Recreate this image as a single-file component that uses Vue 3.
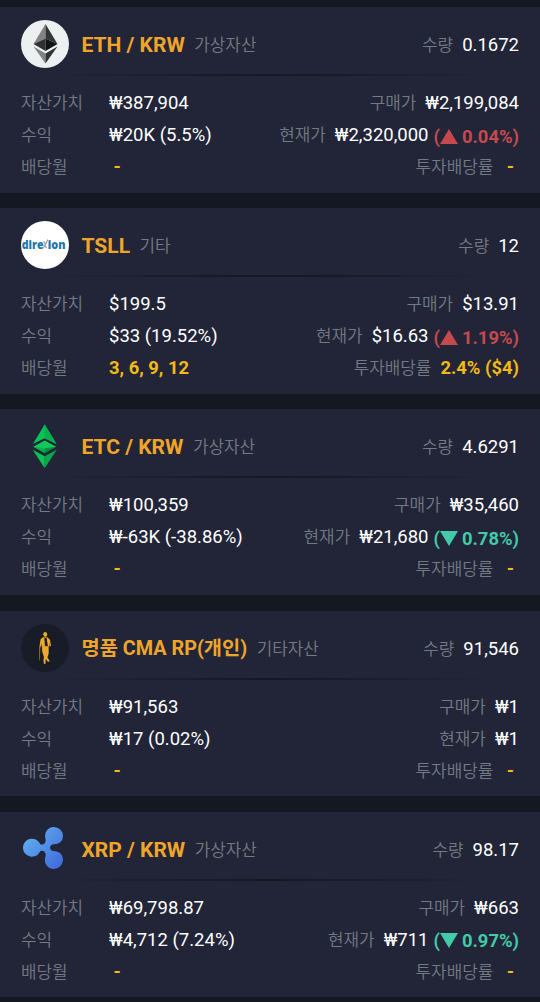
<template>
	<div class="asset-list">
		<section v-for="item in assets" :key="item.name" class="card">
			<header class="head">
				<svg v-if="item.icon === 'eth'" class="logo" viewBox="0 0 48 48">
					<circle cx="24" cy="24" r="24" fill="#ecf0f1" />
					<path fill="#828384" d="M24.5 4 12.5 24l12-5.5z" />
					<path fill="#343535" d="M24.5 4v14.5l12 5.5z" />
					<path fill="#2f3030" d="m12.5 24 12-5.5V31z" />
					<path fill="#131313" d="m36.5 24-12-5.5V31z" />
					<path fill="#828384" d="m12.5 26.5 12 7V43.5z" />
					<path fill="#343535" d="m36.5 26.5-12 7V43.5z" />
				</svg>
				<svg v-else-if="item.icon === 'direxion'" class="logo" viewBox="0 0 48 48">
					<circle cx="24" cy="24" r="24" fill="#fff" />
					<text class="brand" x="0.8" y="27.5" textLength="21.7" lengthAdjust="spacingAndGlyphs">dire</text>
					<text class="brand" x="26.8" y="27.5" textLength="17.7" lengthAdjust="spacingAndGlyphs">ion</text>
					<path d="M20.8 28q3-2 6-9.5M22.3 20.5q1.6 0 2 3.5.4 3 1.8 3" fill="none" stroke="#9a9da2" stroke-width="1.2" />
				</svg>
				<svg v-else-if="item.icon === 'etc'" class="logo" viewBox="0 -1 48 48">
					<path fill="#0bc255" d="M23.7 1.5 11.9 21l11.8-5.8L35.5 21z" />
					<path fill="#0aaf4d" d="M23.7 1.5v13.7L35.5 21z" />
					<path fill="#12c95c" d="m12.3 23.7 11.4-6.2 11.4 6.2-11.4 4.5z" />
					<path fill="#0aaf4d" d="m12.3 23.7 11.4 1.6v5z" />
					<path fill="#078f3e" d="m35.1 23.7-11.4 1.6v5z" />
					<path fill="#0bc255" d="m11.7 26.8 12 6.5v12z" />
					<path fill="#0aa64a" d="m35.8 26.8-12.1 6.5v12z" />
				</svg>
				<svg v-else-if="item.icon === 'cma'" class="logo" viewBox="0 0 48 48">
					<circle cx="24" cy="24" r="24" fill="#171c26" />
					<g fill="#f2a92b">
						<path d="M22.2 10.5q.2-2.4 2-2.4t2 2.3l.5.3-.6.4q-.2 1.8-1.7 1.8t-2-1.8l-.8-.3z" />
						<path d="m22 13.2-2.4 2-1.3 8.3.9.4 1.3-4.8v3.6h7.5v-4.3l.6 4.1 1.4-.5-1-6.2-2.4-2.3-1.5-.5z" />
						<path d="M21 22.5h6.6l.1 7-1.3 4 2.3 3.5-1.7 1-2.2-3-.3 3 .3 1.5-1.9.6-.4-3.4.4-4-1.7-5z" />
						<path d="m18.2 23.6 1.1.2-.5 12.8h-.6z" fill="#a0762c" />
					</g>
					<path fill="#171c26" d="m23.3 13.2 1.1.9 1.1-.8 1.4 8.9-3-.4z" />
				</svg>
				<svg v-else class="logo" viewBox="0 0 48 48">
					<defs>
						<linearGradient id="xrp-fill" x1="0" y1="0" x2="1" y2="1">
							<stop offset="0" stop-color="#66b8f1" />
							<stop offset="1" stop-color="#3d66db" />
						</linearGradient>
					</defs>
					<path fill="url(#xrp-fill)" d="M32.5 2A9 9 0 0 0 24.3 13q1.2 3.5-1 5.8-1.2 1.3-4 .4A9 9 0 1 0 19.3 26.1q2.8-.9 4 .4 2.2 2.4 1 5.8A9 9 0 0 0 32.5 44 9.2 9.2 0 0 0 42 34.5Q41.5 26.8 33 26.1q-3.7-.3-4-3.4.3-3.1 4-3.4Q41.5 18.8 42 11.2A9.2 9.2 0 0 0 32.5 2z" />
				</svg>
				<h2 :class="['name', { long: item.name.length > 10 }]">{{ item.name }}</h2>
				<span class="label kind">{{ item.kind }}</span>
				<span class="label push">수량</span>
				<span class="value">{{ item.amount }}</span>
			</header>
			<div class="divider"></div>
			<div class="row">
				<span class="label first">자산가치</span>
				<span class="value">{{ item.total }}</span>
				<span class="label push">구매가</span>
				<span class="value">{{ item.buy }}</span>
			</div>
			<div class="row">
				<span class="label first">수익</span>
				<span class="value">{{ item.profit }}</span>
				<span class="label push">현재가</span>
				<span class="value">{{ item.price }}</span>
				<span v-if="item.rate" :class="['rate', item.dir]">
					<span>(</span>
					<svg class="arrow" viewBox="0 0 18 15">
						<path :d="item.dir === 'up' ? 'M9 0l9 15H0z' : 'M0 0h18L9 15z'" fill="currentColor" />
					</svg>
					<span>{{ item.rate }})</span>
				</span>
			</div>
			<div class="row">
				<span class="label first">배당월</span>
				<span :class="['dividend', { none: !item.months }]">{{ item.months || '-' }}</span>
				<span class="label push">투자배당률</span>
				<span :class="['dividend', 'right', { none: !item.yield }]">{{ item.yield || '-' }}</span>
			</div>
		</section>
	</div>
</template>

<script setup>
const assets = [
	{ icon: 'eth', name: 'ETH / KRW', kind: '가상자산', amount: '0.1672', total: '₩387,904', buy: '₩2,199,084', profit: '₩20K (5.5%)', price: '₩2,320,000', rate: '0.04%', dir: 'up' },
	{ icon: 'direxion', name: 'TSLL', kind: '기타', amount: '12', total: '$199.5', buy: '$13.91', profit: '$33 (19.52%)', price: '$16.63', rate: '1.19%', dir: 'up', months: '3, 6, 9, 12', yield: '2.4% ($4)' },
	{ icon: 'etc', name: 'ETC / KRW', kind: '가상자산', amount: '4.6291', total: '₩100,359', buy: '₩35,460', profit: '₩-63K (-38.86%)', price: '₩21,680', rate: '0.78%', dir: 'down' },
	{ icon: 'cma', name: '명품 CMA RP(개인)', kind: '기타자산', amount: '91,546', total: '₩91,563', buy: '₩1', profit: '₩17 (0.02%)', price: '₩1' },
	{ icon: 'xrp', name: 'XRP / KRW', kind: '가상자산', amount: '98.17', total: '₩69,798.87', buy: '₩663', profit: '₩4,712 (7.24%)', price: '₩711', rate: '0.97%', dir: 'down' },
]
</script>

<style>
body {
	margin: 0;
	background: #141821;
}
</style>

<style scoped>
.asset-list {
	display: flex;
	flex-direction: column;
	gap: 15.6px;
	box-sizing: border-box;
	height: 1002px;
	padding-top: 7px;
	overflow: hidden;
	background: #141821;
	font-family: Roboto, 'Noto Sans CJK KR', sans-serif;
}
.card {
	flex: none;
	box-sizing: border-box;
	height: 185.6px;
	padding: 13px 21px 0;
	background: #212537;
}
.head {
	display: flex;
	align-items: center;
	height: 48px;
}
.logo {
	flex: none;
	width: 48px;
	height: 48px;
}
.brand {
	font-family: 'Open Sans', sans-serif;
	font-size: 12.5px;
	font-weight: 800;
	fill: #1c75ad;
}
.name {
	margin: 2px 0 0 12.5px;
	font-size: 21px;
	line-height: 28px;
	font-weight: 700;
	color: #f0a52a;
	white-space: nowrap;
}
.long {
	font-size: 19.8px;
}
.label {
	font-family: 'Noto Sans CJK KR', sans-serif;
	font-size: 16.9px;
	line-height: 24px;
	font-weight: 350;
	color: #747a84;
	white-space: nowrap;
}
.kind {
	margin-left: 9.5px;
}
.push {
	margin-left: auto;
	margin-right: 9px;
}
.value {
	font-size: 18.5px;
	line-height: 24px;
	color: #fff;
	white-space: nowrap;
}
.head .value {
	margin-top: 2px;
}
.divider {
	height: 2px;
	margin: 6px 21px 11px;
	background: linear-gradient(90deg, transparent, #141821 50%, transparent);
}
.row {
	display: flex;
	align-items: center;
	height: 32px;
}
.row .label {
	margin-top: -2px;
}
.first {
	width: 88px;
}
.rate {
	display: flex;
	align-items: center;
	margin: 3px 0 0 5px;
	font-size: 18.4px;
	line-height: 24px;
	font-weight: 700;
	white-space: nowrap;
}
.up {
	color: #c6494e;
}
.down {
	color: #43caa9;
}
.arrow {
	width: 18px;
	height: 15px;
	margin: -1px 4px 0 0;
}
.dividend {
	font-size: 18.4px;
	line-height: 24px;
	font-weight: 700;
	color: #f5b916;
}
.none {
	margin-left: 4.5px;
}
.right.none {
	margin-right: 5px;
}
</style>
